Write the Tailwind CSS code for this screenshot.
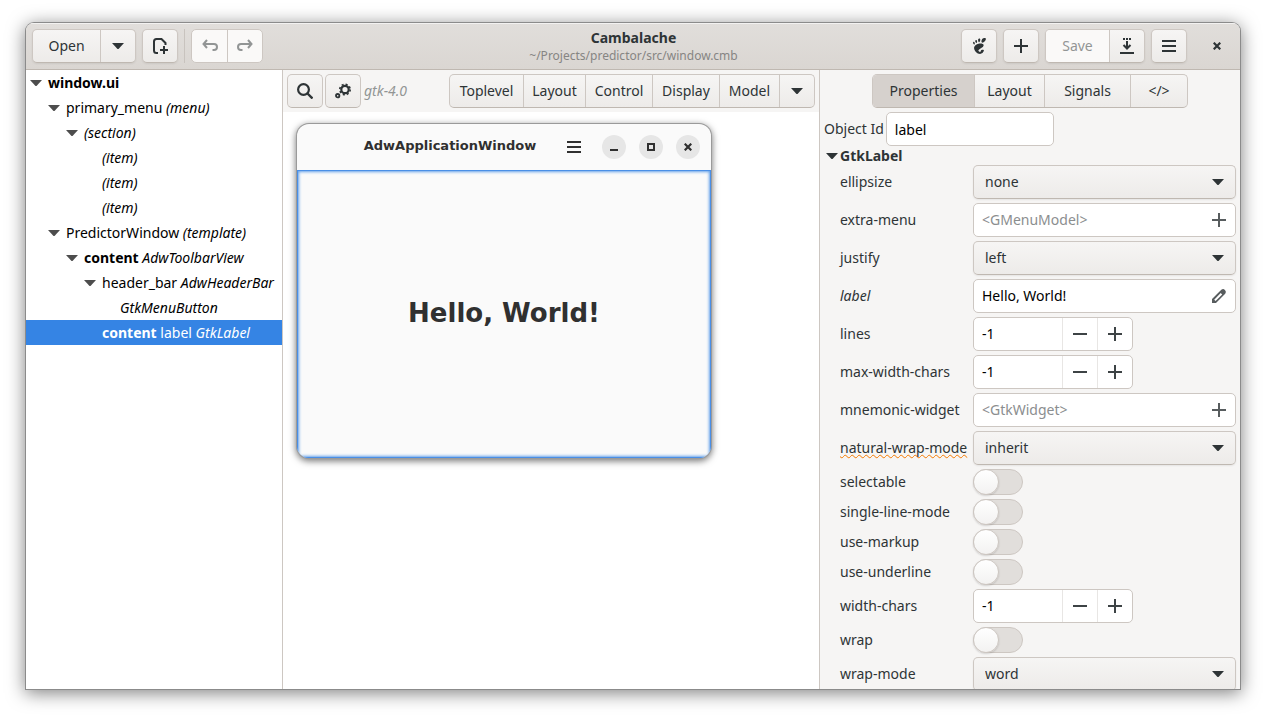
<!DOCTYPE html>
<html lang="en">
<head>
<meta charset="utf-8">
<meta name="viewport" content="width=device-width, initial-scale=1">
<title>Cambalache</title>
<script src="https://cdn.jsdelivr.net/npm/@tailwindcss/browser@4"></script>
</head>
<body class="h-screen bg-white px-[26px] pt-[23px] pb-[29px] font-['Noto_Sans',sans-serif] text-[14px] leading-5 text-[#2e3436]">
<svg class="hidden" aria-hidden="true">
  <symbol id="caret" viewBox="0 0 12 6"><path d="M0 0h12L6.500 6h-1z" fill="currentColor"/></symbol>
  <symbol id="plus" viewBox="0 0 14 14"><path d="M7 0v14M0 7h14" stroke="currentColor" stroke-width="2"/></symbol>
  <symbol id="minus" viewBox="0 0 14 14"><path d="M0 7h14" stroke="currentColor" stroke-width="2"/></symbol>
  <symbol id="menu" viewBox="0 0 14 12"><path d="M0 1h14M0 6h14M0 11h14" stroke="currentColor" stroke-width="2"/></symbol>
  <symbol id="cross" viewBox="0 0 8 8"><path d="M.7.7l6.600 6.600M7.300.7L.7 7.300" stroke="currentColor" stroke-width="2.200"/></symbol>
</svg>

<div class="flex h-full flex-col overflow-hidden rounded-t-lg bg-white shadow-[0_0_0_1px_#8b8b8b,0_3px_18px_1px_rgba(0,0,0,0.5)]">

  <header class="grid h-[47px] shrink-0 grid-cols-[1fr_auto_1fr] items-center border-b border-[#bfb8b1] bg-linear-to-b from-[#e1dedb] to-[#dad6d2] pr-[5px] pl-1.5 shadow-[inset_0_1px_#f3f2f1]">
    <div class="flex items-center gap-1.5">
      <div class="flex h-[34px] overflow-hidden rounded-[5px] border border-[#cdc7c2] border-b-[#bfb8b1] bg-linear-to-b from-[#f6f5f4] to-[#edebe9] shadow-[0_1px_2px_rgba(0,0,0,0.07)]">
        <button class="w-[67px]">Open</button>
        <button class="flex w-[35px] items-center justify-center border-l border-[#cdc7c2]" aria-label="Recent projects"><svg class="h-1.5 w-3"><use href="#caret"/></svg></button>
      </div>
      <button class="flex h-[34px] w-9 items-center justify-center rounded-[5px] border border-[#cdc7c2] border-b-[#bfb8b1] bg-linear-to-b from-[#f6f5f4] to-[#edebe9] shadow-[0_1px_2px_rgba(0,0,0,0.07)]" aria-label="New file">
        <svg class="size-4" viewBox="0 0 16 16" fill="none" stroke="currentColor" stroke-width="2"><path d="M6 15H4.500Q2 15 2 12.500V3.500Q2 1 4.500 1H9.500L13.500 5V7"/><path d="M12 8v8M8 12h8"/></svg>
      </button>
      <div class="h-[34px] w-px bg-[#c8c3be]"></div>
      <div class="flex h-[34px] overflow-hidden rounded-[5px] border border-[#cdc7c2] bg-[#faf9f8] text-[#929595]">
        <button class="flex w-[35px] items-center justify-center" disabled aria-label="Undo"><svg class="size-4" viewBox="0 0 16 16" fill="none" stroke="currentColor" stroke-width="2"><path d="M5 2L1.500 6 5 10M1.500 6H12Q15 6 15 9T12 12H10.500"/></svg></button>
        <button class="flex w-[35px] items-center justify-center border-l border-[#cdc7c2]" disabled aria-label="Redo"><svg class="size-4" viewBox="0 0 16 16" fill="none" stroke="currentColor" stroke-width="2"><path d="M11 2l3.500 4L11 10M14.500 6H4Q1 6 1 9T4 12H5.500"/></svg></button>
      </div>
    </div>

    <div class="text-center">
      <h1 class="text-[14px] leading-5 font-bold">Cambalache</h1>
      <p class="text-[12px] leading-4 text-[#868583]">~/Projects/predictor/src/window.cmb</p>
    </div>

    <div class="flex items-center justify-end gap-1.5">
      <button class="flex h-[34px] w-9 items-center justify-center rounded-[5px] border border-[#cdc7c2] border-b-[#bfb8b1] bg-linear-to-b from-[#f6f5f4] to-[#edebe9] shadow-[0_1px_2px_rgba(0,0,0,0.07)]" aria-label="GNOME">
        <svg class="h-4 w-[13px]" viewBox="0 0 97 119" fill="currentColor"><path d="M86.068 0C61.466 0 56.851 35.041 70.691 35.041 84.529 35.041 110.671 0 86.068 0zM45.217 30.699C52.586 31.149 60.671 2.577 46.821 4.374 32.976 6.171 37.845 30.249 45.217 30.699zM11.445 48.453C16.686 46.146 12.120 23.581 3.208 29.735-5.700 35.890 6.204 50.759 11.445 48.453zM26.212 36.642C32.451 35.370 32.793 9.778 21.667 14.369 10.539 18.961 19.978 37.916 26.212 36.642zM58.791 93.913C59.898 102.367 52.589 106.542 45.431 101.092 22.644 83.743 83.160 75.088 79.171 51.386 75.860 31.712 15.495 37.769 8.621 68.553 3.968 89.374 27.774 118.260 52.614 118.260 64.834 118.260 78.929 107.226 81.566 93.248 83.580 82.589 57.867 86.860 58.791 93.913z"/></svg>
      </button>
      <button class="flex h-[34px] w-9 items-center justify-center rounded-[5px] border border-[#cdc7c2] border-b-[#bfb8b1] bg-linear-to-b from-[#f6f5f4] to-[#edebe9] shadow-[0_1px_2px_rgba(0,0,0,0.07)]" aria-label="Add"><svg class="size-3.5"><use href="#plus"/></svg></button>
      <div class="flex h-[34px] overflow-hidden rounded-[5px] border border-[#cdc7c2] border-b-[#bfb8b1] bg-linear-to-b from-[#f6f5f4] to-[#edebe9] shadow-[0_1px_2px_rgba(0,0,0,0.07)]">
        <button class="w-[63px] bg-[#faf9f8] text-[#929595]" disabled>Save</button>
        <button class="flex w-[35px] items-center justify-center border-l border-[#cdc7c2]" aria-label="Save as"><svg class="size-4" viewBox="0 0 16 16" fill="none" stroke="currentColor" stroke-width="2"><path d="M4 1h2M7 1h2M10 1h2M8 3v7M4.500 7L8 10.500 11.500 7M1 15h14"/></svg></button>
      </div>
      <button class="flex h-[34px] w-9 items-center justify-center rounded-[5px] border border-[#cdc7c2] border-b-[#bfb8b1] bg-linear-to-b from-[#f6f5f4] to-[#edebe9] shadow-[0_1px_2px_rgba(0,0,0,0.07)]" aria-label="Main menu"><svg class="h-3 w-3.5"><use href="#menu"/></svg></button>
      <button class="ml-1.5 flex h-[34px] w-9 items-center justify-center" aria-label="Close"><svg class="size-2"><use href="#cross"/></svg></button>
    </div>
  </header>

  <div class="flex min-h-0 flex-1">
    <nav class="w-64 shrink-0 overflow-hidden whitespace-nowrap text-black" aria-label="Object tree">
      <ul class="leading-[25px]">
        <li class="flex items-center gap-1.5 pl-1 font-bold"><svg class="h-1.5 w-3 shrink-0 text-[#4d4d4d]"><use href="#caret"/></svg>window.ui</li>
        <li class="flex items-center gap-1.5 pl-[22px]"><svg class="h-1.5 w-3 shrink-0 text-[#4d4d4d]"><use href="#caret"/></svg><span>primary_menu <i>(menu)</i></span></li>
        <li class="flex items-center gap-1.5 pl-10"><svg class="h-1.5 w-3 shrink-0 text-[#4d4d4d]"><use href="#caret"/></svg><i>(section)</i></li>
        <li class="pl-[76px]"><i>(item)</i></li>
        <li class="pl-[76px]"><i>(item)</i></li>
        <li class="pl-[76px]"><i>(item)</i></li>
        <li class="flex items-center gap-1.5 pl-[22px]"><svg class="h-1.5 w-3 shrink-0 text-[#4d4d4d]"><use href="#caret"/></svg><span>PredictorWindow <i>(template)</i></span></li>
        <li class="flex items-center gap-1.5 pl-10"><svg class="h-1.5 w-3 shrink-0 text-[#4d4d4d]"><use href="#caret"/></svg><span><b>content</b> <i>AdwToolbarView</i></span></li>
        <li class="flex items-center gap-1.5 pl-[58px]"><svg class="h-1.5 w-3 shrink-0 text-[#4d4d4d]"><use href="#caret"/></svg><span>header_bar <i>AdwHeaderBar</i></span></li>
        <li class="pl-[94px]"><i>GtkMenuButton</i></li>
        <li class="bg-[#3584e4] pl-[76px] text-white" aria-current="true"><b>content</b> label <i>GtkLabel</i></li>
      </ul>
    </nav>

    <main class="flex min-w-0 flex-1 flex-col border-l border-[#cdc7c2]">
      <div class="flex items-center gap-0.5 bg-[#f6f5f4] p-1">
        <button class="flex h-[34px] w-9 items-center justify-center rounded-[5px] border border-[#cdc7c2] border-b-[#bfb8b1] bg-linear-to-b from-[#f6f5f4] to-[#edebe9]" aria-label="Search"><svg class="size-4" viewBox="0 0 16 16" fill="none" stroke="currentColor"><circle cx="6.500" cy="6.500" r="5.400" stroke-width="2.200"/><path d="M10.500 10.500l5 5" stroke-width="2.400"/></svg></button>
        <button class="flex h-[34px] w-9 items-center justify-center rounded-[5px] border border-[#cdc7c2] border-b-[#bfb8b1] bg-linear-to-b from-[#f6f5f4] to-[#edebe9]" aria-label="Settings"><svg class="size-4" viewBox="0 0 16 16" fill="none" stroke="currentColor"><circle cx="10" cy="6.500" r="3.700" stroke-width="2.200"/><circle cx="10" cy="6.500" r="5.200" stroke-width="1.600" stroke-dasharray="2.040 2.040"/><circle cx="2.700" cy="12.700" r="1.700" stroke-width="1.800"/></svg></button>
        <span class="pl-px text-[#929595] italic">gtk-4.0</span>
        <div class="ml-auto flex h-[34px] overflow-hidden rounded-[5px] border border-[#cdc7c2] border-b-[#bfb8b1] bg-linear-to-b from-[#f6f5f4] to-[#edebe9]">
          <button class="w-[73px]">Toplevel</button>
          <button class="w-[62px] border-l border-[#cdc7c2]">Layout</button>
          <button class="w-[67px] border-l border-[#cdc7c2]">Control</button>
          <button class="w-[67px] border-l border-[#cdc7c2]">Display</button>
          <button class="w-[60px] border-l border-[#cdc7c2]">Model</button>
          <button class="flex w-[35px] items-center justify-center border-l border-[#cdc7c2]" aria-label="More"><svg class="h-1.5 w-3"><use href="#caret"/></svg></button>
        </div>
      </div>

      <div class="flex-1 py-3 pr-3 pl-3.5">
        <section class="flex w-[414px] flex-col overflow-hidden rounded-xl bg-[#fafafa] text-[#303030] shadow-[0_0_0_1px_#9a9a9a,0_2px_7px_1px_rgba(0,0,0,0.55)]" aria-label="Preview">
          <div class="flex h-[46px] items-center pr-[11px] pl-12">
            <h2 class="mr-3 flex-1 pb-0.5 text-center font-['DejaVu_Sans',sans-serif] text-[13px] font-bold">AdwApplicationWindow</h2>
            <div class="flex items-center justify-end gap-[13px]">
              <button class="mr-2 flex items-center" aria-label="Menu"><svg class="h-3 w-3.5"><use href="#menu"/></svg></button>
              <button class="flex size-6 items-center justify-center rounded-full bg-[#e6e6e6]" aria-label="Minimize"><svg class="size-2" viewBox="0 0 8 8"><path d="M0 7h8" stroke="currentColor" stroke-width="2"/></svg></button>
              <button class="flex size-6 items-center justify-center rounded-full bg-[#e6e6e6]" aria-label="Maximize"><svg class="size-2" viewBox="0 0 8 8"><path d="M1 1h6v6H1z" fill="none" stroke="currentColor" stroke-width="2"/></svg></button>
              <button class="flex size-6 items-center justify-center rounded-full bg-[#e6e6e6]" aria-label="Close preview"><svg class="size-2"><use href="#cross"/></svg></button>
            </div>
          </div>
          <div class="flex h-72 items-center justify-center pb-0.5 font-['DejaVu_Sans',sans-serif] text-[26px] leading-8 font-bold shadow-[inset_0_0_0_1px_#4a8fe6,inset_0_0_3px_2px_#62a0ea]">Hello, World!</div>
        </section>
      </div>
    </main>

    <aside class="w-[421px] shrink-0 overflow-hidden border-l border-[#cdc7c2] bg-[#f6f5f4] p-1">
      <div class="flex justify-center">
        <div class="flex h-[34px] overflow-hidden rounded-[5px] border border-[#cdc7c2] border-b-[#bfb8b1] bg-linear-to-b from-[#f6f5f4] to-[#edebe9]">
          <button class="w-[101px] bg-[#d6d1cd]" aria-pressed="true">Properties</button>
          <button class="w-[70px] border-l border-[#cdc7c2]">Layout</button>
          <button class="w-[86px] border-l border-[#cdc7c2]">Signals</button>
          <button class="w-[57px] border-l border-[#cdc7c2]">&lt;/&gt;</button>
        </div>
      </div>
      <div class="mt-1 flex items-center gap-0.5">
        <label for="object-id">Object Id</label>
        <input id="object-id" class="h-[34px] w-42 rounded-[5px] border border-[#cdc7c2] bg-white px-2 text-black" value="label">
      </div>
      <button class="flex h-[19px] items-center pl-0.5 font-bold"><svg class="mr-0.5 h-1.5 w-3"><use href="#caret"/></svg>GtkLabel</button>

      <div class="grid grid-cols-[129px_1fr] items-center gap-1 pl-4">
        <label for="ellipsize">ellipsize</label>
        <div class="grid items-center">
          <select id="ellipsize" class="col-start-1 row-start-1 h-[34px] w-full appearance-none rounded-[5px] border border-[#cdc7c2] border-b-[#bfb8b1] bg-linear-to-b from-[#f6f5f4] to-[#edebe9] px-[11px] shadow-[0_1px_2px_rgba(0,0,0,0.07)]"><option>none</option></select>
          <svg class="pointer-events-none col-start-1 row-start-1 mr-3 h-1.5 w-3 justify-self-end"><use href="#caret"/></svg>
        </div>

        <label for="extra-menu">extra-menu</label>
        <div class="flex h-[34px] items-center rounded-[5px] border border-[#cdc7c2] bg-white pr-[9px] pl-2">
          <input id="extra-menu" class="min-w-0 flex-1 outline-none placeholder:text-[#8b8e8f]" placeholder="&lt;GMenuModel&gt;">
          <button class="text-[#575c5e]" aria-label="Add menu model"><svg class="size-3.5"><use href="#plus"/></svg></button>
        </div>

        <label for="justify">justify</label>
        <div class="grid items-center">
          <select id="justify" class="col-start-1 row-start-1 h-[34px] w-full appearance-none rounded-[5px] border border-[#cdc7c2] border-b-[#bfb8b1] bg-linear-to-b from-[#f6f5f4] to-[#edebe9] px-[11px] shadow-[0_1px_2px_rgba(0,0,0,0.07)]"><option>left</option></select>
          <svg class="pointer-events-none col-start-1 row-start-1 mr-3 h-1.5 w-3 justify-self-end"><use href="#caret"/></svg>
        </div>

        <label for="label" class="italic">label</label>
        <div class="flex h-[34px] items-center rounded-[5px] border border-[#cdc7c2] bg-white pr-[9px] pl-2">
          <input id="label" class="min-w-0 flex-1 text-black outline-none" value="Hello, World!">
          <button class="text-[#575c5e]" aria-label="Edit text"><svg class="size-3.5" viewBox="0 0 14 14"><path fill="currentColor" fill-rule="evenodd" d="M0 14V10L9.300.8Q11.200-.7 12.900.9T13.200 4.700L4 14zM2.200 10.700L3.600 12 10.200 5.400 8.700 3.900z"/></svg></button>
        </div>

        <label for="lines">lines</label>
        <div class="flex h-[34px] w-40 overflow-hidden rounded-[5px] border border-[#cdc7c2] bg-white text-[#3d4345]">
          <input id="lines" class="min-w-0 flex-1 pl-2 text-black outline-none" value="-1">
          <button class="flex w-[35px] items-center justify-center border-l border-[#e8e6e4]" aria-label="Decrease lines"><svg class="size-3.5"><use href="#minus"/></svg></button>
          <button class="flex w-[35px] items-center justify-center border-l border-[#e8e6e4]" aria-label="Increase lines"><svg class="size-3.5"><use href="#plus"/></svg></button>
        </div>

        <label for="max-width-chars">max-width-chars</label>
        <div class="flex h-[34px] w-40 overflow-hidden rounded-[5px] border border-[#cdc7c2] bg-white text-[#3d4345]">
          <input id="max-width-chars" class="min-w-0 flex-1 pl-2 text-black outline-none" value="-1">
          <button class="flex w-[35px] items-center justify-center border-l border-[#e8e6e4]" aria-label="Decrease max-width-chars"><svg class="size-3.5"><use href="#minus"/></svg></button>
          <button class="flex w-[35px] items-center justify-center border-l border-[#e8e6e4]" aria-label="Increase max-width-chars"><svg class="size-3.5"><use href="#plus"/></svg></button>
        </div>

        <label for="mnemonic-widget">mnemonic-widget</label>
        <div class="flex h-[34px] items-center rounded-[5px] border border-[#cdc7c2] bg-white pr-[9px] pl-2">
          <input id="mnemonic-widget" class="min-w-0 flex-1 outline-none placeholder:text-[#8b8e8f]" placeholder="&lt;GtkWidget&gt;">
          <button class="text-[#575c5e]" aria-label="Add widget"><svg class="size-3.5"><use href="#plus"/></svg></button>
        </div>

        <label for="natural-wrap-mode" class="whitespace-nowrap underline decoration-[#f57900] decoration-wavy decoration-1 underline-offset-1 [text-decoration-skip-ink:none]">natural-wrap-mode</label>
        <div class="grid items-center">
          <select id="natural-wrap-mode" class="col-start-1 row-start-1 h-[34px] w-full appearance-none rounded-[5px] border border-[#cdc7c2] border-b-[#bfb8b1] bg-linear-to-b from-[#f6f5f4] to-[#edebe9] px-[11px] shadow-[0_1px_2px_rgba(0,0,0,0.07)]"><option>inherit</option></select>
          <svg class="pointer-events-none col-start-1 row-start-1 mr-3 h-1.5 w-3 justify-self-end"><use href="#caret"/></svg>
        </div>

        <label for="selectable">selectable</label>
        <input id="selectable" type="checkbox" role="switch" class="h-[26px] w-[50px] appearance-none rounded-full border border-[#cdc7c2] bg-[#e1dedb] before:-m-px before:block before:size-[26px] before:rounded-full before:border before:border-[#cdc7c2] before:bg-linear-to-b before:from-white before:to-[#f3f2f1] before:shadow-[0_1px_2px_rgba(0,0,0,0.15)] before:content-['']">

        <label for="single-line-mode">single-line-mode</label>
        <input id="single-line-mode" type="checkbox" role="switch" class="h-[26px] w-[50px] appearance-none rounded-full border border-[#cdc7c2] bg-[#e1dedb] before:-m-px before:block before:size-[26px] before:rounded-full before:border before:border-[#cdc7c2] before:bg-linear-to-b before:from-white before:to-[#f3f2f1] before:shadow-[0_1px_2px_rgba(0,0,0,0.15)] before:content-['']">

        <label for="use-markup">use-markup</label>
        <input id="use-markup" type="checkbox" role="switch" class="h-[26px] w-[50px] appearance-none rounded-full border border-[#cdc7c2] bg-[#e1dedb] before:-m-px before:block before:size-[26px] before:rounded-full before:border before:border-[#cdc7c2] before:bg-linear-to-b before:from-white before:to-[#f3f2f1] before:shadow-[0_1px_2px_rgba(0,0,0,0.15)] before:content-['']">

        <label for="use-underline">use-underline</label>
        <input id="use-underline" type="checkbox" role="switch" class="h-[26px] w-[50px] appearance-none rounded-full border border-[#cdc7c2] bg-[#e1dedb] before:-m-px before:block before:size-[26px] before:rounded-full before:border before:border-[#cdc7c2] before:bg-linear-to-b before:from-white before:to-[#f3f2f1] before:shadow-[0_1px_2px_rgba(0,0,0,0.15)] before:content-['']">

        <label for="width-chars">width-chars</label>
        <div class="flex h-[34px] w-40 overflow-hidden rounded-[5px] border border-[#cdc7c2] bg-white text-[#3d4345]">
          <input id="width-chars" class="min-w-0 flex-1 pl-2 text-black outline-none" value="-1">
          <button class="flex w-[35px] items-center justify-center border-l border-[#e8e6e4]" aria-label="Decrease width-chars"><svg class="size-3.5"><use href="#minus"/></svg></button>
          <button class="flex w-[35px] items-center justify-center border-l border-[#e8e6e4]" aria-label="Increase width-chars"><svg class="size-3.5"><use href="#plus"/></svg></button>
        </div>

        <label for="wrap">wrap</label>
        <input id="wrap" type="checkbox" role="switch" class="h-[26px] w-[50px] appearance-none rounded-full border border-[#cdc7c2] bg-[#e1dedb] before:-m-px before:block before:size-[26px] before:rounded-full before:border before:border-[#cdc7c2] before:bg-linear-to-b before:from-white before:to-[#f3f2f1] before:shadow-[0_1px_2px_rgba(0,0,0,0.15)] before:content-['']">

        <label for="wrap-mode">wrap-mode</label>
        <div class="grid items-center">
          <select id="wrap-mode" class="col-start-1 row-start-1 h-[34px] w-full appearance-none rounded-[5px] border border-[#cdc7c2] border-b-[#bfb8b1] bg-linear-to-b from-[#f6f5f4] to-[#edebe9] px-[11px] shadow-[0_1px_2px_rgba(0,0,0,0.07)]"><option>word</option></select>
          <svg class="pointer-events-none col-start-1 row-start-1 mr-3 h-1.5 w-3 justify-self-end"><use href="#caret"/></svg>
        </div>
      </div>
    </aside>
  </div>
</div>
</body>
</html>
